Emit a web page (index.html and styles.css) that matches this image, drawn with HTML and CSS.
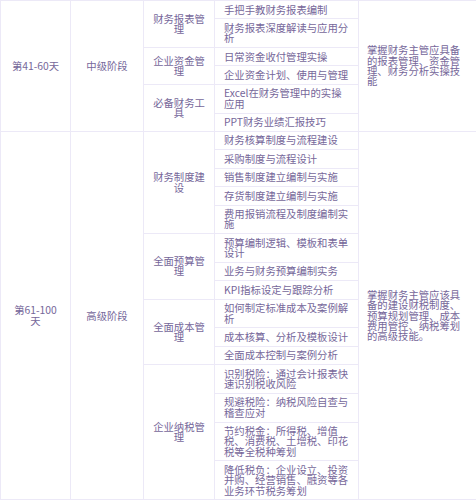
FILE: index.html
```html
<!DOCTYPE html>
<html lang="zh-CN">
<head>
<meta charset="utf-8">
<title>课程安排</title>
<link rel="stylesheet" href="styles.css">
</head>
<body>
<table class="plan">
  <colgroup>
    <col class="c-period">
    <col class="c-stage">
    <col class="c-cat">
    <col class="c-topic">
    <col class="c-goal">
  </colgroup>
  <tbody>
    <tr>
      <td class="period" rowspan="6">第41-60天</td>
      <td class="stage" rowspan="6">中级阶段</td>
      <td class="cat" rowspan="2">财务报表管理</td>
      <td class="topic">手把手教财务报表编制</td>
      <td class="goal" rowspan="6">掌握财务主管应具备的报表管理、资金管理、财务分析实操技能</td>
    </tr>
    <tr><td class="topic">财务报表深度解读与应用分析</td></tr>
    <tr>
      <td class="cat" rowspan="2">企业资金管理</td>
      <td class="topic">日常资金收付管理实操</td>
    </tr>
    <tr><td class="topic">企业资金计划、使用与管理</td></tr>
    <tr>
      <td class="cat" rowspan="2">必备财务工具</td>
      <td class="topic">Excel在财务管理中的实操应用</td>
    </tr>
    <tr><td class="topic">PPT财务业绩汇报技巧</td></tr>

    <tr>
      <td class="period" rowspan="15">第61-100天</td>
      <td class="stage" rowspan="15">高级阶段</td>
      <td class="cat" rowspan="5">财务制度建设</td>
      <td class="topic">财务核算制度与流程建设</td>
      <td class="goal" rowspan="15">掌握财务主管应该具备的建设财税制度、预算规划管理、成本费用管控、纳税筹划的高级技能。</td>
    </tr>
    <tr><td class="topic">采购制度与流程设计</td></tr>
    <tr><td class="topic">销售制度建立编制与实施</td></tr>
    <tr><td class="topic">存货制度建立编制与实施</td></tr>
    <tr><td class="topic">费用报销流程及制度编制实施</td></tr>
    <tr>
      <td class="cat" rowspan="3">全面预算管理</td>
      <td class="topic">预算编制逻辑、模板和表单设计</td>
    </tr>
    <tr><td class="topic">业务与财务预算编制实务</td></tr>
    <tr><td class="topic">KPI指标设定与跟踪分析</td></tr>
    <tr>
      <td class="cat" rowspan="3">全面成本管理</td>
      <td class="topic">如何制定标准成本及案例解析</td>
    </tr>
    <tr><td class="topic">成本核算、分析及模板设计</td></tr>
    <tr><td class="topic">全面成本控制与案例分析</td></tr>
    <tr>
      <td class="cat" rowspan="4">企业纳税管理</td>
      <td class="topic">识别税险：通过会计报表快速识别税收风险</td>
    </tr>
    <tr><td class="topic">规避税险：纳税风险自查与稽查应对</td></tr>
    <tr><td class="topic">节约税金：所得税、增值税、消费税、土增税、印花税等全税种筹划</td></tr>
    <tr><td class="topic">降低税负：企业设立、投资并购、经营销售、融资等各业务环节税务筹划</td></tr>
  </tbody>
</table>
</body>
</html>
```

FILE: styles.css
```css
html, body {
  margin: 0;
  padding: 0;
  background: #ffffff;
}

.plan {
  width: 476px;
  table-layout: fixed;
  border-collapse: collapse;
  font-family: "Noto Sans CJK SC", "Noto Sans", sans-serif;
  font-size: 10.35px;
  line-height: 10.3px;
  color: #76679a;
}

.c-period { width: 70px; }
.c-stage  { width: 73px; }
.c-cat    { width: 71px; }
.c-topic  { width: 144px; }
.c-goal   { width: 118px; }

.plan td {
  border: 1px solid #ece9f7;
  padding: 3.55px 8px;
  vertical-align: middle;
  word-break: break-all;
}

.plan .period {
  text-align: center;
  padding-left: 9px;
  padding-right: 9px;
}

.plan .stage,
.plan .cat {
  text-align: center;
}

.plan .topic {
  text-align: left;
  padding-left: 9px;
  padding-right: 8px;
}

.plan .goal {
  text-align: left;
}
```
